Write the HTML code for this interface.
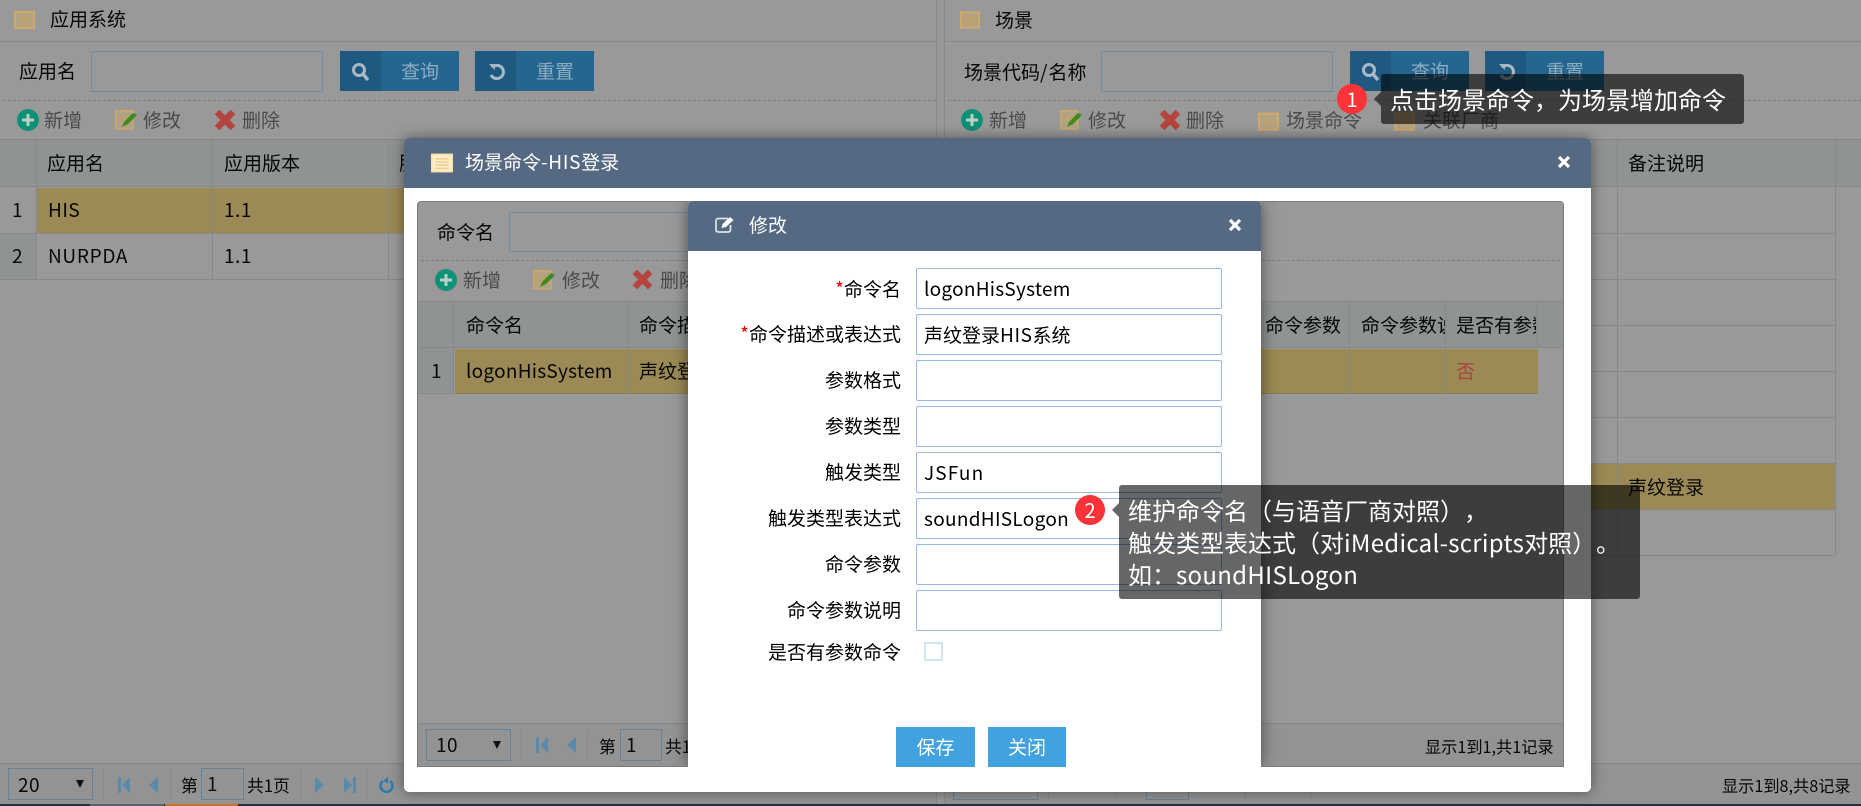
<!DOCTYPE html>
<html lang="zh"><head><meta charset="utf-8"><title>场景命令</title>
<style>
html,body{margin:0;padding:0;width:1861px;height:806px;overflow:hidden;background:#999}
body{position:relative;font-family:"Noto Sans CJK SC","Liberation Sans",sans-serif;color:#060606;text-spacing-trim:space-all}
div,svg,span.t{box-sizing:border-box}
.a{position:absolute}
.t{position:absolute;white-space:nowrap;height:24px;line-height:24px;font-size:19px}
.g{color:#4a4a4a}
.e{letter-spacing:.5px}
.l{position:absolute;background:#888}
.inp{position:absolute;border:1px solid #6c8fa9;height:41px}
.btn{position:absolute;width:119px;height:40px;background:#256690}
.btn i{position:absolute;left:0;top:0;width:41px;height:40px;background:#1f597f}
.btn span{position:absolute;left:61px;top:8px;line-height:24px;font-size:19px;color:#8fadc2;white-space:nowrap}
.btn svg{position:absolute;left:10px;top:12px;width:20px;height:18px}
svg.i{position:absolute;overflow:visible}
.s{position:absolute;border:1px solid #658299;height:32px}
.f{position:absolute;left:916px;width:306px;height:41px;border:1px solid #95b8e7;border-radius:2px;background:#fff;font-size:19px;line-height:39px;padding-left:7px;color:#000;white-space:nowrap}
.lb{position:absolute;left:690px;width:211px;text-align:right;height:24px;line-height:24px;font-size:19px;color:#000;white-space:nowrap}
.lb b{font-weight:normal;color:#f00}
.tip{position:absolute;background:rgba(0,0,0,.6);border-radius:3px;color:#fff;font-size:24px;line-height:32px;white-space:nowrap}
.tip span{letter-spacing:.3px}
.bd{position:absolute;width:30px;height:30px;border-radius:50%;background:#fa3338;color:#fff;font-size:20px;line-height:30px;text-align:center}
</style></head><body>
<svg width="0" height="0" style="position:absolute">
<defs>
<symbol id="page" viewBox="0 0 21 18"><rect x="1" y="1" width="19" height="16" fill="#b0a388" stroke="#d2a865" stroke-width="2"/><path d="M4.500 5.500h12M4.500 8h12M4.500 10.500h12M4.500 13h12" stroke="#c4a263" stroke-width="1.300"/></symbol>
<symbol id="pageb" viewBox="0 0 21 18"><rect x=".8" y=".8" width="19.4" height="16.4" fill="#ffefd0" stroke="#ffe0a8" stroke-width="1.6"/><path d="M4 5h13M4 8h13M4 11h13M4 14h13" stroke="#f5c678" stroke-width="1.200"/></symbol>
<symbol id="plus" viewBox="0 0 22 22"><circle cx="11" cy="11" r="11" fill="#0f9079"/><path d="M11 5v12M5 11h12" stroke="#bcd0c6" stroke-width="3"/></symbol>
<symbol id="edit" viewBox="0 0 22 20"><rect x=".8" y=".8" width="17" height="18" fill="#b0a388" stroke="#cda968" stroke-width="1.500"/><path d="M3.500 5h11M3.500 8h9M3.500 11h6M3.500 14h5" stroke="#c4a263" stroke-width="1.100"/><path d="M7 17l2-5L18 3l4 2-9 9z" fill="#3f8a18"/></symbol>
<symbol id="del" viewBox="0 0 22 22"><path d="M3 3L19 19M19 3L3 19" stroke="#b4443d" stroke-width="6.500"/></symbol>
<symbol id="find" viewBox="0 0 20 18"><circle cx="8" cy="7" r="5.500" fill="none" stroke="#a9bac6" stroke-width="3"/><path d="M12 11l5 6" stroke="#a9bac6" stroke-width="3.400"/></symbol>
<symbol id="redo" viewBox="0 0 20 18"><path d="M5 4.500A6.600 6.600 0 1 1 4 12" fill="none" stroke="#a9bac6" stroke-width="3"/><path d="M2 1h6v6z" fill="#a9bac6"/></symbol>
<symbol id="first" viewBox="0 0 12 16"><rect width="3" height="16" fill="#5a8aa9"/><path d="M12 0v16L4 8z" fill="#5a8aa9"/></symbol>
<symbol id="prev" viewBox="0 0 9 16"><path d="M9 0v16L0 8z" fill="#5a8aa9"/></symbol>
<symbol id="next" viewBox="0 0 9 16"><path d="M0 0v16L9 8z" fill="#5a8aa9"/></symbol>
<symbol id="last" viewBox="0 0 12 16"><rect x="9" width="3" height="16" fill="#5a8aa9"/><path d="M0 0v16L8 8z" fill="#5a8aa9"/></symbol>
<symbol id="ref" viewBox="0 0 15 16"><path d="M4 4A6 6 0 1 0 11 4" fill="none" stroke="#2d7bae" stroke-width="2.600"/><path d="M6 0v7L1.500 3.500z" fill="#2d7bae" transform="translate(3 0)"/></symbol>
<symbol id="x" viewBox="0 0 14 14"><path d="M2 2L12 12M12 2L2 12" stroke="#fff" stroke-width="3.200"/></symbol>
<symbol id="pen" viewBox="0 0 20 17"><path d="M13 2.500H3.500Q1 2.500 1 5v8.500Q1 16 3.500 16h9.500q2.500 0 2.500-2.500V9" fill="none" stroke="#dfe4ea" stroke-width="1.700"/><path d="M6.500 12l1-4L15 1l3.500 3-7.500 7z" fill="#fff"/></symbol>
</defs></svg>

<!-- left panel -->
<div class="l" style="left:0;top:41px;width:936px;height:1px"></div>
<div class="l" style="left:936px;top:0;width:1px;height:804px"></div>
<svg class="i" style="left:14px;top:11px;width:21px;height:18px"><use href="#page"/></svg>
<span class="t" style="left:50px;top:7px">应用系统</span>
<span class="t" style="left:19px;top:59px">应用名</span>
<div class="inp" style="left:91px;top:51px;width:232px"></div>
<div class="btn" style="left:340px;top:51px"><i></i><svg style="left:11px"><use href="#find"/></svg><span>查询</span></div>
<div class="btn" style="left:475px;top:51px"><i></i><svg style="left:12px"><use href="#redo"/></svg><span>重置</span></div>
<div class="a" style="left:3px;top:100px;width:933px;border-top:1px dashed #7f7f7f"></div>
<svg class="i" style="left:17px;top:109px;width:22px;height:22px"><use href="#plus"/></svg><span class="t g" style="left:44px;top:108px">新增</span>
<svg class="i" style="left:115px;top:110px;width:22px;height:20px"><use href="#edit"/></svg><span class="t g" style="left:143px;top:108px">修改</span>
<svg class="i" style="left:214px;top:109px;width:22px;height:22px"><use href="#del"/></svg><span class="t g" style="left:242px;top:108px">删除</span>
<div class="a" style="left:0;top:139px;width:936px;height:48px;background:#8f9393;border-top:1px solid #888;border-bottom:1px solid #888"></div>
<div class="a" style="left:0;top:233px;width:36px;height:46px;background:#8f9393"></div>
<div class="a" style="left:37px;top:188px;width:899px;height:45px;background:#9b8a55"></div>
<div class="l" style="left:0;top:233px;width:936px;height:1px"></div>
<div class="l" style="left:0;top:279px;width:936px;height:1px"></div>
<div class="l" style="left:36px;top:139px;width:1px;height:140px"></div>
<div class="l" style="left:212px;top:139px;width:1px;height:140px"></div>
<div class="l" style="left:388px;top:139px;width:1px;height:140px"></div>
<span class="t" style="left:47px;top:151px">应用名</span><span class="t" style="left:224px;top:151px">应用版本</span><span class="t" style="left:399px;top:151px">服务</span>
<span class="t" style="left:12px;top:198px">1</span><span class="t e" style="left:48px;top:198px">HIS</span><span class="t e" style="left:224px;top:198px">1.1</span>
<span class="t" style="left:12px;top:244px">2</span><span class="t" style="left:48px;top:244px;letter-spacing:.7px">NURPDA</span><span class="t e" style="left:224px;top:244px">1.1</span>
<div class="a" style="left:0;top:763px;width:936px;height:41px;background:#939393;border-top:1px solid #888"></div>
<div class="s" style="left:8px;top:768px;width:85px"></div><span class="t e" style="left:18px;top:773px">20</span>
<svg class="i" style="left:76px;top:780px;width:8px;height:8px"><path d="M0 0h8L4 8z" fill="#111"/></svg>
<div class="l" style="left:103px;top:768px;width:1px;height:32px"></div>
<svg class="i" style="left:118px;top:777px;width:12px;height:16px"><use href="#first"/></svg>
<svg class="i" style="left:149px;top:777px;width:9px;height:16px"><use href="#prev"/></svg>
<div class="l" style="left:170px;top:768px;width:1px;height:32px"></div>
<span class="t" style="left:181px;top:773px;font-size:16.800px">第</span>
<div class="s" style="left:201px;top:768px;width:43px"></div><span class="t" style="left:207px;top:772px;color:#111">1</span>
<span class="t" style="left:247px;top:773px;font-size:16.800px">共1页</span>
<div class="l" style="left:300px;top:768px;width:1px;height:32px"></div>
<svg class="i" style="left:315px;top:777px;width:9px;height:16px"><use href="#next"/></svg>
<svg class="i" style="left:344px;top:777px;width:12px;height:16px"><use href="#last"/></svg>
<div class="l" style="left:366px;top:768px;width:1px;height:32px"></div>
<svg class="i" style="left:379px;top:777px;width:15px;height:16px"><use href="#ref"/></svg>

<!-- right panel -->
<div class="l" style="left:944px;top:0;width:1px;height:804px"></div>
<div class="l" style="left:944px;top:41px;width:917px;height:1px"></div>
<svg class="i" style="left:960px;top:11px;width:20px;height:18px"><use href="#page"/></svg>
<span class="t" style="left:995px;top:8px">场景</span>
<span class="t" style="left:964px;top:60px">场景代码<span style="letter-spacing:1px">/</span>名称</span>
<div class="inp" style="left:1101px;top:51px;width:232px"></div>
<div class="btn" style="left:1350px;top:51px"><i></i><svg style="left:11px"><use href="#find"/></svg><span>查询</span></div>
<div class="btn" style="left:1485px;top:51px"><i></i><svg style="left:12px"><use href="#redo"/></svg><span>重置</span></div>
<div class="a" style="left:948px;top:100px;width:913px;border-top:1px dashed #7f7f7f"></div>
<svg class="i" style="left:961px;top:109px;width:22px;height:22px"><use href="#plus"/></svg><span class="t g" style="left:989px;top:108px">新增</span>
<svg class="i" style="left:1060px;top:110px;width:22px;height:20px"><use href="#edit"/></svg><span class="t g" style="left:1088px;top:108px">修改</span>
<svg class="i" style="left:1159px;top:109px;width:22px;height:22px"><use href="#del"/></svg><span class="t g" style="left:1186px;top:108px">删除</span>
<svg class="i" style="left:1258px;top:112px;width:21px;height:19px"><use href="#page"/></svg><span class="t g" style="left:1286px;top:108px">场景命令</span>
<svg class="i" style="left:1394px;top:112px;width:21px;height:19px"><use href="#page"/></svg><span class="t g" style="left:1423px;top:108px">关联厂商</span>
<div class="a" style="left:944px;top:139px;width:917px;height:48px;background:#8f9393;border-top:1px solid #888;border-bottom:1px solid #888"></div>
<div class="a" style="left:1591px;top:464px;width:244px;height:45px;background:#9b8a55"></div>
<div class="l" style="left:944px;top:233px;width:891px;height:1px"></div>
<div class="l" style="left:944px;top:279px;width:891px;height:1px"></div>
<div class="l" style="left:944px;top:325px;width:891px;height:1px"></div>
<div class="l" style="left:944px;top:371px;width:891px;height:1px"></div>
<div class="l" style="left:944px;top:417px;width:891px;height:1px"></div>
<div class="l" style="left:944px;top:463px;width:891px;height:1px"></div>
<div class="l" style="left:944px;top:509px;width:891px;height:1px"></div>
<div class="l" style="left:944px;top:555px;width:891px;height:1px"></div>
<div class="l" style="left:1617px;top:139px;width:1px;height:416px"></div>
<div class="l" style="left:1835px;top:139px;width:1px;height:416px"></div>
<span class="t" style="left:1628px;top:151px">备注说明</span>
<span class="t" style="left:1628px;top:475px">声纹登录</span>
<div class="a" style="left:945px;top:763px;width:916px;height:41px;background:#939393;border-top:1px solid #888"></div>
<div class="s" style="left:953px;top:768px;width:85px"></div>
<div class="l" style="left:1048px;top:768px;width:1px;height:32px"></div>
<div class="l" style="left:1115px;top:768px;width:1px;height:32px"></div>
<div class="s" style="left:1146px;top:768px;width:43px"></div>
<div class="l" style="left:1245px;top:768px;width:1px;height:32px"></div>
<div class="l" style="left:1310px;top:768px;width:1px;height:32px"></div>
<span class="t" style="left:1722px;top:773px;font-size:16.200px">显示1到8,共8记录</span>
<div class="a" style="left:0;top:804px;width:1861px;height:2px;background:#1f3344"></div>
<div class="a" style="left:90px;top:804px;width:74px;height:2px;background:#51646f"></div>
<div class="a" style="left:165px;top:804px;width:73px;height:2px;background:#c8722e"></div>

<!-- outer modal -->
<div class="a" style="left:404px;top:138px;width:1187px;height:654px;background:#fff;border-radius:5px;box-shadow:0 0 14px rgba(0,0,0,.45)"></div>
<div class="a" style="left:404px;top:138px;width:1187px;height:50px;background:#556982;border-radius:5px 5px 0 0"></div>
<svg class="i" style="left:431px;top:153px;width:22px;height:20px"><use href="#pageb"/></svg>
<span class="t" style="left:465px;top:150px;color:#fff">场景命令<span style="letter-spacing:.7px">-HIS</span>登录</span>
<svg class="i" style="left:1557px;top:155px;width:14px;height:14px"><use href="#x"/></svg>

<!-- inner grid panel -->
<div class="a" style="left:417px;top:201px;width:1147px;height:566px;background:#999;border:1px solid #7b7b7b;border-radius:4px 4px 0 0"></div>
<span class="t" style="left:437px;top:220px">命令名</span>
<div class="inp" style="left:509px;top:212px;width:260px;height:40px"></div>
<div class="a" style="left:421px;top:260px;width:1139px;border-top:1px dashed #7f7f7f"></div>
<svg class="i" style="left:435px;top:269px;width:22px;height:22px"><use href="#plus"/></svg><span class="t g" style="left:463px;top:268px">新增</span>
<svg class="i" style="left:533px;top:270px;width:22px;height:20px"><use href="#edit"/></svg><span class="t g" style="left:562px;top:268px">修改</span>
<svg class="i" style="left:632px;top:269px;width:21px;height:21px"><use href="#del"/></svg><span class="t g" style="left:660px;top:268px">删除</span>
<div class="a" style="left:418px;top:301px;width:1145px;height:47px;background:#8f9393;border-top:1px solid #888;border-bottom:1px solid #888"></div>
<div class="a" style="left:418px;top:348px;width:35px;height:46px;background:#8f9393;border-bottom:1px solid #888"></div>
<div class="a" style="left:455px;top:349px;width:1083px;height:45px;background:#9b8a55;border-bottom:1px solid #8b7e55"></div>
<div class="l" style="left:453px;top:301px;width:1px;height:93px"></div>
<div class="l" style="left:627px;top:301px;width:1px;height:93px"></div>
<div class="l" style="left:1349px;top:301px;width:1px;height:93px"></div>
<div class="l" style="left:1445px;top:301px;width:1px;height:93px"></div>
<div class="l" style="left:1537px;top:301px;width:1px;height:47px"></div>
<span class="t" style="left:466px;top:313px">命令名</span><span class="t" style="left:639px;top:313px">命令描述</span>
<span class="t" style="left:1265px;top:313px">命令参数</span>
<div class="a" style="left:1361px;top:313px;width:84px;height:24px;overflow:hidden"><span class="t" style="left:0;top:0">命令参数说明</span></div>
<div class="a" style="left:1456px;top:313px;width:80px;height:24px;overflow:hidden"><span class="t" style="left:0;top:0">是否有参数命令</span></div>
<span class="t" style="left:431px;top:359px">1</span>
<span class="t" style="left:466px;top:359px;letter-spacing:.25px">logonHisSystem</span>
<span class="t" style="left:639px;top:359px">声纹登录</span>
<span class="t" style="left:1456px;top:359px;color:#a8443b">否</span>
<div class="a" style="left:418px;top:723px;width:1145px;height:43px;background:#939393;border-top:1px solid #888"></div>
<div class="s" style="left:426px;top:729px;width:85px"></div><span class="t e" style="left:436px;top:733px">10</span>
<svg class="i" style="left:493px;top:741px;width:8px;height:8px"><path d="M0 0h8L4 8z" fill="#111"/></svg>
<div class="l" style="left:521px;top:729px;width:1px;height:32px"></div>
<svg class="i" style="left:536px;top:737px;width:12px;height:16px"><use href="#first"/></svg>
<svg class="i" style="left:567px;top:737px;width:9px;height:16px"><use href="#prev"/></svg>
<div class="l" style="left:587px;top:729px;width:1px;height:32px"></div>
<span class="t" style="left:599px;top:734px;font-size:16.800px">第</span>
<div class="s" style="left:620px;top:729px;width:42px"></div><span class="t" style="left:626px;top:733px">1</span>
<span class="t" style="left:665px;top:734px;font-size:16.800px">共1页</span>
<span class="t" style="left:1425px;top:734px;font-size:16.200px">显示1到1,共1记录</span>

<!-- edit dialog: shadow clipped to the inner panel -->
<div class="a" style="left:418px;top:202px;width:1145px;height:564px;overflow:hidden">
  <div class="a" style="left:270px;top:-1px;width:573px;height:566px;background:#fff;border-radius:5px 5px 0 0;box-shadow:0 0 16px rgba(0,0,0,.5)"></div>
</div>
<div class="a" style="left:688px;top:201px;width:573px;height:566px;background:#fff;border-radius:5px 5px 0 0"></div>
<div class="a" style="left:688px;top:201px;width:573px;height:50px;background:#556982;border-radius:5px 5px 0 0"></div>
<svg class="i" style="left:715px;top:216px;width:20px;height:17px"><use href="#pen"/></svg>
<span class="t" style="left:749px;top:213px;color:#fff">修改</span>
<svg class="i" style="left:1228px;top:218px;width:14px;height:14px"><use href="#x"/></svg>

<div class="lb" style="top:277px"><b>*</b>命令名</div>
<div class="f" style="top:268px;letter-spacing:.25px">logonHisSystem</div>
<div class="lb" style="top:322px"><b>*</b>命令描述或表达式</div>
<div class="f" style="top:314px">声纹登录<span style="letter-spacing:.6px">HIS</span>系统</div>
<div class="lb" style="top:368px">参数格式</div>
<div class="f" style="top:360px"></div>
<div class="lb" style="top:414px">参数类型</div>
<div class="f" style="top:406px"></div>
<div class="lb" style="top:460px">触发类型</div>
<div class="f" style="top:452px;letter-spacing:1.100px">JSFun</div>
<div class="lb" style="top:506px">触发类型表达式</div>
<div class="f" style="top:498px;letter-spacing:.3px">soundHISLogon</div>
<div class="lb" style="top:552px">命令参数</div>
<div class="f" style="top:544px"></div>
<div class="lb" style="top:598px">命令参数说明</div>
<div class="f" style="top:590px"></div>
<div class="lb" style="top:640px">是否有参数命令</div>
<div class="a" style="left:924px;top:642px;width:19px;height:19px;border:2px solid #cfe4f5;background:#fff"></div>
<div class="a" style="left:896px;top:727px;width:79px;height:40px;background:#40a2de;color:#fff;font-size:19px;line-height:40px;text-align:center">保存</div>
<div class="a" style="left:988px;top:727px;width:78px;height:40px;background:#40a2de;color:#fff;font-size:19px;line-height:40px;text-align:center">关闭</div>

<!-- tooltips -->
<div class="tip" style="left:1381px;top:74px;width:363px;height:50px;padding:9px 0 0 9px">点击场景命令，为场景增加命令</div>
<div class="a" style="left:1374px;top:92px;width:0;height:0;border:7px solid transparent;border-left:0;border-right-color:rgba(0,0,0,.6)"></div>
<div class="bd" style="left:1337px;top:84px">1</div>
<div class="tip" style="left:1119px;top:485px;width:521px;height:114px;padding:9px 0 0 9px">维护命令名（与语音厂商对照），<br>触发类型表达式（对<span>iMedical-scripts</span>对照）。<br>如：<span>soundHISLogon</span></div>
<div class="a" style="left:1112px;top:503px;width:0;height:0;border:7px solid transparent;border-left:0;border-right-color:rgba(0,0,0,.6)"></div>
<div class="bd" style="left:1075px;top:495px">2</div>
</body></html>
